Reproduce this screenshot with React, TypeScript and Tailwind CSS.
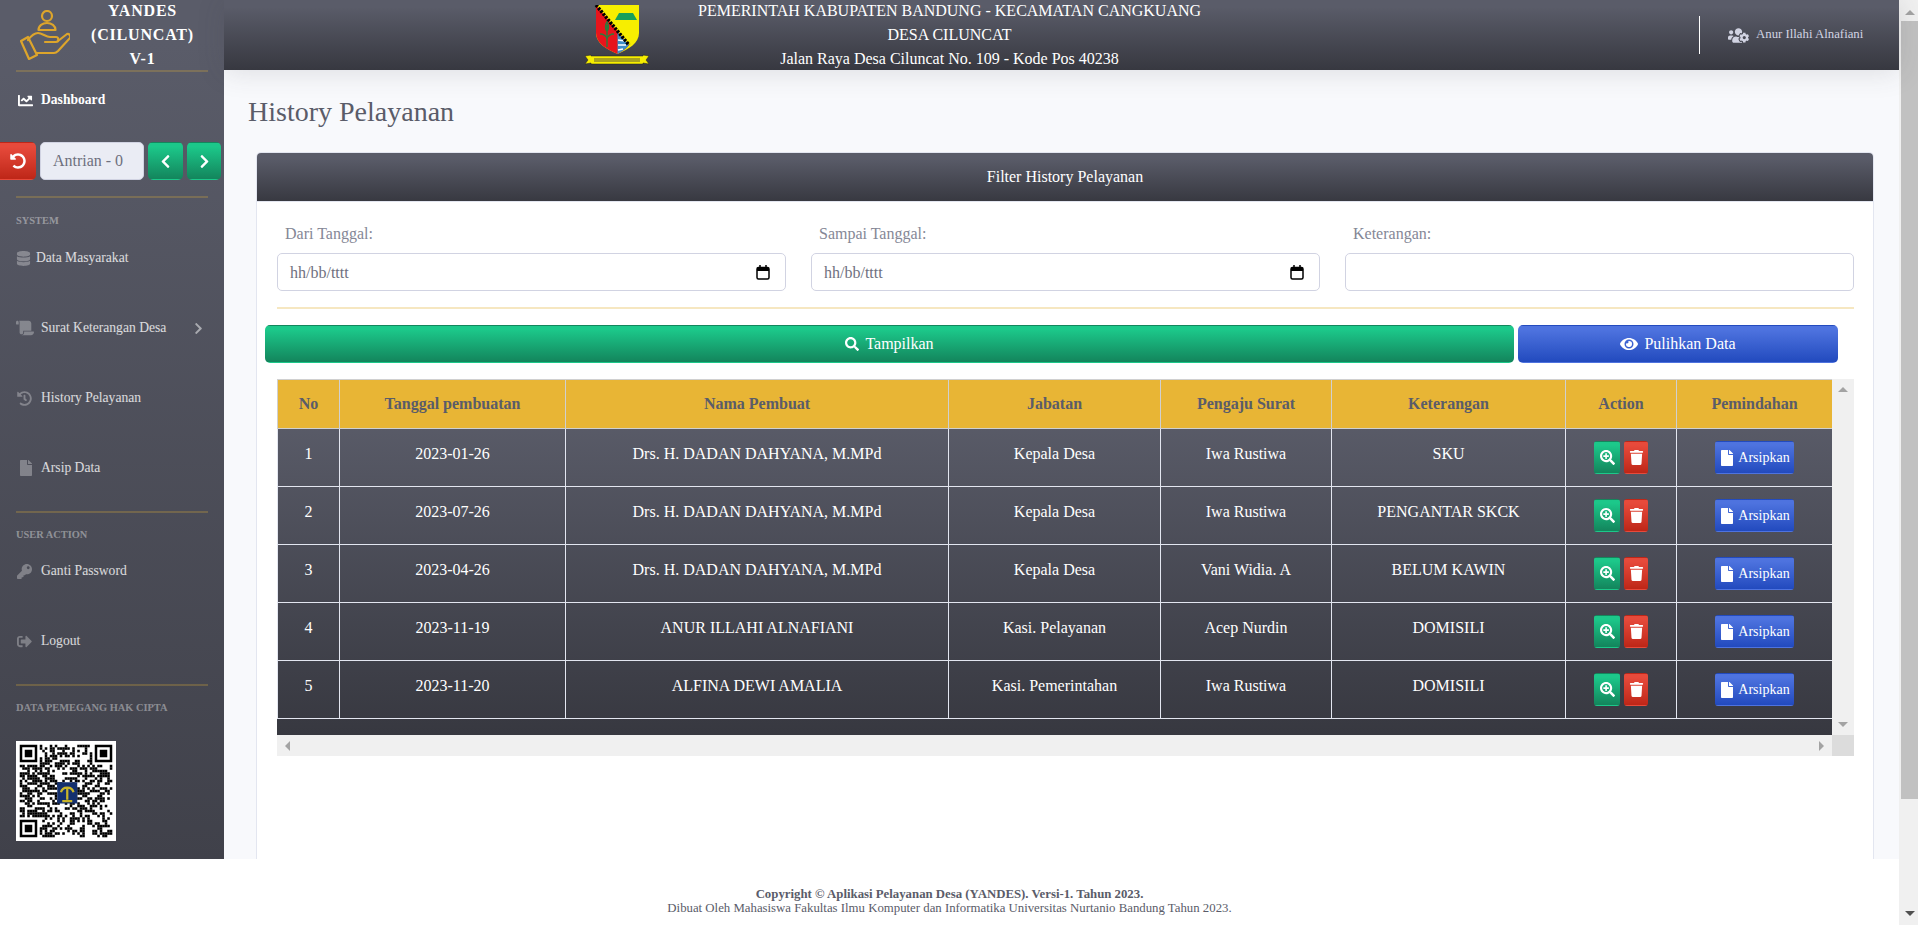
import {
  FaChartLine,
  FaChevronLeft,
  FaChevronRight,
  FaDatabase,
  FaEye,
  FaFile,
  FaHistory,
  FaKey,
  FaScroll,
  FaSearch,
  FaSearchPlus,
  FaSignOutAlt,
  FaTrash,
  FaUndoAlt,
  FaUsersCog,
} from "react-icons/fa";

const darkGradient = "bg-linear-to-b from-[#5a5c69] from-10% to-[#373840]";
const greenBtn = "border border-transparent bg-linear-to-b from-[#1cc88a] from-10% to-[#13855c] text-white";
const redBtn = "border border-transparent bg-linear-to-b from-[#e74a3b] from-10% to-[#be2617] text-white";
const blueBtn = "border border-transparent bg-linear-to-b from-[#4e73df] from-10% to-[#224abe] text-white";

const rows = [
  { no: 1, date: "2023-01-26", name: "Drs. H. DADAN DAHYANA, M.MPd", job: "Kepala Desa", by: "Iwa Rustiwa", note: "SKU" },
  { no: 2, date: "2023-07-26", name: "Drs. H. DADAN DAHYANA, M.MPd", job: "Kepala Desa", by: "Iwa Rustiwa", note: "PENGANTAR SKCK" },
  { no: 3, date: "2023-04-26", name: "Drs. H. DADAN DAHYANA, M.MPd", job: "Kepala Desa", by: "Vani Widia. A", note: "BELUM KAWIN" },
  { no: 4, date: "2023-11-19", name: "ANUR ILLAHI ALNAFIANI", job: "Kasi. Pelayanan", by: "Acep Nurdin", note: "DOMISILI" },
  { no: 5, date: "2023-11-20", name: "ALFINA DEWI AMALIA", job: "Kasi. Pemerintahan", by: "Iwa Rustiwa", note: "DOMISILI" },
];

// QR drawn from a seeded pattern, it only has to look like the printed code
function QrCode() {
  const size = 37;
  const cells: React.ReactNode[] = [];
  let seed = 1234567;
  for (let y = 0; y < size; y++) {
    for (let x = 0; x < size; x++) {
      seed = (seed * 1103515245 + 12345) & 0x7fffffff;
      const inFinder = (x < 8 && y < 8) || (x > 28 && y < 8) || (x < 8 && y > 28);
      if (!inFinder && (seed >> 16) % 2 === 0) {
        cells.push(<rect key={`${x}-${y}`} x={x} y={y} width="1.02" height="1.02" fill="#000" />);
      }
    }
  }
  const finder = (x: number, y: number) => (
    <g key={`f${x}${y}`}>
      <rect x={x} y={y} width="7" height="7" fill="#000" />
      <rect x={x + 1} y={y + 1} width="5" height="5" fill="#fff" />
      <rect x={x + 2} y={y + 2} width="3" height="3" fill="#000" />
    </g>
  );
  return (
    <svg viewBox="-1.5 -1.5 40 40" className="size-[100px] bg-white">
      {cells}
      {finder(0, 0)}
      {finder(30, 0)}
      {finder(0, 30)}
      <rect x="15" y="15" width="8" height="8.500" fill="#14306e" />
      <path d="M19 17v5M17 22.500h4M16.500 19c.5-2.500 4.500-2.500 5 0" stroke="#c9b52a" strokeWidth=".9" fill="none" />
    </svg>
  );
}

function HandLogo() {
  return (
    <svg viewBox="0 0 50 50" className="size-[50px]" fill="none" stroke="#dda52b" strokeWidth="2.200" strokeLinejoin="round" strokeLinecap="round">
      <circle cx="27" cy="6" r="5" />
      <path d="M18.500 20c0-4.500 4-7 8.500-7s8.500 2.500 8.500 7z" />
      <path d="M1 31l7-4 9 18-8 4z" />
      <path d="M8 30c3-4 6-7 10-7 4 0 8 4 12 4h6c3 0 3 5 0 5H25" />
      <path d="M38 31l9-7c2-1 4 2 3 4L38 41c-1 1-2 2-4 2H17" />
    </svg>
  );
}

function ShieldLogo() {
  return (
    <svg viewBox="0 0 64 60" className="h-[60px] w-16">
      <path d="M11 0h43v28c0 10-10 16-21.500 21C21 44 11 38 11 28z" fill="#f7ee00" />
      <path d="M11 0l33 40c-3 4-7 6.500-11.500 9C21 44 11 38 11 28z" fill="#e8141c" />
      <path d="M32.500 49V27L44 40c-3 4-7 6.500-11.500 9z" fill="#3e8ec7" />
      <path d="M33 35l7 1M33 40l8 0M33 45l5-1" stroke="#fff" strokeWidth="1.500" />
      <path d="M11 0l33 40" stroke="#000" strokeWidth="3.500" strokeDasharray="2.500 1.200" />
      <path d="M34 8h14l4 7H30z" fill="#19a05a" />
      <path d="M22 20v22M15 29c3 0 7 2 7 5 0-3 4-5 7-5M22 17c-2 3-2 7 0 9 2-2 2-6 0-9z" stroke="#2c7c3c" strokeWidth="1.400" fill="none" />
      <path d="M0 51l6-1v1h52v-1l6 1-3 4 3 4-6-1v1H6v-1l-6 1 3-4z" fill="#f7ee00" stroke="#222" strokeWidth=".5" />
      <rect x="9" y="53" width="46" height="4" fill="#a9a31f" />
    </svg>
  );
}

function Divider({ className }: { className: string }) {
  return <div className={`mx-4 h-0.5 bg-[#e8b535]/25 ${className}`} />;
}

function SectionLabel({ children, className }: { children: React.ReactNode; className: string }) {
  return <div className={`px-4 text-[10.4px] font-bold uppercase text-white/40 ${className}`}>{children}</div>;
}

function NavItem({ icon, label, iconWidth = "w-[25px]", chevron }: { icon: React.ReactNode; label: string; iconWidth?: string; chevron?: boolean }) {
  return (
    <div className="flex h-[70px] items-center pl-4 pr-[19px] text-[13.6px] text-white/80">
      <span className={`flex ${iconWidth} shrink-0 text-white/30`}>{icon}</span>
      <span className="flex-1">{label}</span>
      {chevron && <FaChevronRight className="text-[13px] text-white/50" />}
    </div>
  );
}

function Sidebar() {
  return (
    <aside className="flex h-full w-56 shrink-0 flex-col overflow-hidden bg-linear-to-b from-[#5a5c69] from-5% to-[#40414a]">
      {/* brand */}
      <div className="flex h-[70px] items-center pl-5">
        <HandLogo />
        <div className="w-[145px] shrink-0 text-center font-extrabold leading-6 tracking-[0.8px] text-white">
          YANDES
          <br />
          (CILUNCAT)
          <br />
          V-1
        </div>
      </div>
      <Divider className="" />
      <div className="flex h-[57px] items-center pl-[18px] text-[13.6px] font-bold text-white">
        <FaChartLine className="mr-2 text-[15px]" />
        Dashboard
      </div>

      {/* antrian */}
      <div className="mt-[13px] flex h-[38px] items-stretch gap-1">
        <button className={`flex w-9 items-center justify-center rounded-r-[5px] ${redBtn}`}>
          <FaUndoAlt className="text-[16px]" />
        </button>
        <div className="flex w-[104px] items-center justify-center rounded-[5px] border border-[#d1d3e2] bg-[#eaecf4] pr-2 text-[#6e707e]">Antrian - 0</div>
        <button className={`flex w-[35px] items-center justify-center rounded-[5px] ${greenBtn}`}>
          <FaChevronLeft className="text-[15px]" />
        </button>
        <button className={`flex w-[34px] items-center justify-center rounded-[5px] ${greenBtn}`}>
          <FaChevronRight className="text-[15px]" />
        </button>
      </div>

      <Divider className="mt-4" />
      <SectionLabel className="h-[25px] pt-[15px]">System</SectionLabel>
      <NavItem icon={<FaDatabase className="text-[15px]" />} label="Data Masyarakat" iconWidth="w-5" />
      <NavItem icon={<FaScroll className="text-[18px]" />} label="Surat Keterangan Desa" chevron />
      <NavItem icon={<FaHistory className="ml-px text-[15px]" />} label="History Pelayanan" />
      <NavItem icon={<FaFile className="ml-0.5 text-[16px]" />} label="Arsip Data" />
      <Divider className="mt-2" />
      <SectionLabel className="h-[23px] pt-[14px]">User Action</SectionLabel>
      <NavItem icon={<FaKey className="ml-px text-[15px]" />} label="Ganti Password" />
      <NavItem icon={<FaSignOutAlt className="ml-px text-[15px]" />} label="Logout" />
      <Divider className="mt-2" />
      <SectionLabel className="h-[55px] pt-[14px]">Data Pemegang Hak Cipta</SectionLabel>
      <div className="pl-4">
        <QrCode />
      </div>
    </aside>
  );
}

function Topbar() {
  return (
    <header className={`relative z-10 flex h-[70px] shrink-0 items-center shadow-[0_2px_28px_0_rgba(58,59,69,0.15)] ${darkGradient}`}>
      <div className="ml-[361px] w-16">
        <ShieldLogo />
      </div>
      <div className="ml-[49px] w-[503px] shrink-0 whitespace-nowrap text-center leading-6 text-white">
        <div>PEMERINTAH KABUPATEN BANDUNG - KECAMATAN CANGKUANG</div>
        <div>DESA CILUNCAT</div>
        <div>Jalan Raya Desa Ciluncat No. 109 - Kode Pos 40238</div>
      </div>
      <div className="ml-[498px] h-[38px] w-px bg-white" />
      <FaUsersCog className="ml-7 text-[21px] text-[#d1d3e2]" />
      <span className="ml-[7px] text-[12.8px] text-[#d1d3e2]">Anur Illahi Alnafiani</span>
    </header>
  );
}

function DateField() {
  return (
    <div className="flex h-[38px] items-center justify-between rounded-[5px] border border-[#d1d3e2] bg-white pl-[12px] pr-[15px] text-[#6e707e]">
      <span className="pt-0.5">hh/bb/tttt</span>
      <svg viewBox="0 0 14 15" className="h-[15px] w-[14px]" fill="none" stroke="#000" strokeWidth="1.500">
        <rect x="1" y="2.500" width="12" height="11.500" rx="1.500" />
        <path d="M1 4.500h12" strokeWidth="3" />
        <path d="M4 0v2M10 0v2" />
      </svg>
    </div>
  );
}

function HistoryTable() {
  const cols = ["w-[62px]", "w-[226px]", "w-[383px]", "w-[212px]", "w-[171px]", "w-[234px]", "w-[111px]", "w-[156px]"];
  const heads = ["No", "Tanggal pembuatan", "Nama Pembuat", "Jabatan", "Pengaju Surat", "Keterangan", "Action", "Pemindahan"];
  return (
    <div className="ml-5 mr-0 mt-4 grid h-[377px] grid-cols-[1555px_22px] grid-rows-[356px_21px]">
      <div className={`overflow-hidden ${darkGradient}`}>
        <table className="w-[1555px] table-fixed border-collapse text-center">
          <colgroup>
            {cols.map((c) => (
              <col key={c} className={c} />
            ))}
          </colgroup>
          <thead>
            <tr className="h-[49px] bg-[#e8b535] font-bold text-[#5a5c69]">
              {heads.map((h) => (
                <th key={h} className="border border-[#d0d0d0]">
                  {h}
                </th>
              ))}
            </tr>
          </thead>
          <tbody>
            {rows.map((r) => (
              <tr key={r.no} className="h-[58px] text-white">
                <td className="border border-[#e3e6f0] pb-[8px]">{r.no}</td>
                <td className="border border-[#e3e6f0] pb-[8px]">{r.date}</td>
                <td className="border border-[#e3e6f0] pb-[8px]">{r.name}</td>
                <td className="border border-[#e3e6f0] pb-[8px]">{r.job}</td>
                <td className="border border-[#e3e6f0] pb-[8px]">{r.by}</td>
                <td className="border border-[#e3e6f0] pb-[8px]">{r.note}</td>
                <td className="border border-[#e3e6f0]">
                  <div className="flex justify-center gap-1">
                    <button className={`flex h-[33px] w-[26px] items-center justify-center rounded-[3px] ${greenBtn}`}>
                      <FaSearchPlus className="text-[15px]" />
                    </button>
                    <button className={`flex h-[33px] w-6 items-center justify-center rounded-[3px] ${redBtn}`}>
                      <FaTrash className="text-[15px]" />
                    </button>
                  </div>
                </td>
                <td className="border border-[#e3e6f0]">
                  <button className={`inline-flex h-[33px] w-[79px] items-center justify-center gap-[3px] rounded-[3px] align-middle text-[14px] ${blueBtn}`}>
                    <FaFile className="text-[16px]" />
                    Arsipkan
                  </button>
                </td>
              </tr>
            ))}
          </tbody>
        </table>
      </div>

      {/* table scrollbars */}
      <div className="flex flex-col items-center justify-between bg-[#f0f0f0] py-2">
        <span className="border-x-[5px] border-b-[5px] border-x-transparent border-b-[#a3a3a3]" />
        <span className="border-x-[5px] border-t-[5px] border-x-transparent border-t-[#a3a3a3]" />
      </div>
      <div className="flex items-center justify-between bg-[#f0f0f0] px-2">
        <span className="border-y-[5px] border-r-[5px] border-y-transparent border-r-[#a3a3a3]" />
        <span className="border-y-[5px] border-l-[5px] border-y-transparent border-l-[#a3a3a3]" />
      </div>
      <div className="bg-[#dcdcdc]" />
    </div>
  );
}

function FilterCard() {
  return (
    <section className="ml-[32px] mr-[25px] mt-[23px] min-h-0 flex-1 overflow-hidden rounded-t-[5px] border border-b-0 border-[#e3e6f0] bg-white">
      <div className={`flex h-[49px] items-center justify-center border-b border-[#e3e6f0] bg-origin-border text-white ${darkGradient}`}>Filter History Pelayanan</div>
      <div className="ml-5 mt-[20px] mr-[19px] grid grid-cols-3 gap-x-[25px] text-[#858796]">
        <div>
          <div className="mb-[7px] pl-2 leading-6">Dari Tanggal:</div>
          <DateField />
        </div>
        <div>
          <div className="mb-[7px] pl-2 leading-6">Sampai Tanggal:</div>
          <DateField />
        </div>
        <div>
          <div className="mb-[7px] pl-2 leading-6">Keterangan:</div>
          <div className="h-[38px] rounded-[5px] border border-[#d1d3e2] bg-white" />
        </div>
      </div>
      <div className="ml-5 mr-[19px] mt-4 h-0.5 bg-[#f6e7c1]" />
      <div className="ml-2 mt-4 flex gap-1">
        <button className={`flex h-[38px] w-[1249px] items-center justify-center gap-1.5 rounded-[5px] ${greenBtn}`}>
          <FaSearch className="text-[14px]" />
          Tampilkan
        </button>
        <button className={`flex h-[38px] w-[320px] items-center justify-center gap-1.5 rounded-[5px] ${blueBtn}`}>
          <FaEye className="text-[18px]" />
          Pulihkan Data
        </button>
      </div>
      <HistoryTable />
    </section>
  );
}

export default function App() {
  return (
    <div className="flex h-[925px] w-[1918px] overflow-hidden bg-white font-['Liberation_Serif',serif] text-base">
      <div className="flex w-[1899px] flex-col">
        <div className="flex h-[859px]">
          <Sidebar />
          <main className="flex min-w-0 flex-1 flex-col bg-[#f8f9fc]">
            <Topbar />
            <h1 className="ml-6 mt-[25px] text-[28px] leading-[34px] text-[#5a5c69]">History Pelayanan</h1>
            <FilterCard />
          </main>
        </div>
        <footer className="pt-[28px] text-center text-[12.8px] leading-[14px] text-[#5a5c69]">
          <div className="font-bold">Copyright © Aplikasi Pelayanan Desa (YANDES). Versi-1. Tahun 2023.</div>
          <div>Dibuat Oleh Mahasiswa Fakultas Ilmu Komputer dan Informatika Universitas Nurtanio Bandung Tahun 2023.</div>
        </footer>
      </div>

      {/* page scrollbar */}
      <div className="flex w-[19px] flex-col items-center bg-[#f0f0f0] pl-0.5">
        <span className="mt-[10px] border-x-[5px] border-b-[5px] border-x-transparent border-b-[#a3a3a3]" />
        <div className="mt-1.5 h-[778px] w-full bg-[#c1c1c1]" />
        <span className="mt-[112px] border-x-[5px] border-t-[5px] border-x-transparent border-t-[#505050]" />
      </div>
    </div>
  );
}
